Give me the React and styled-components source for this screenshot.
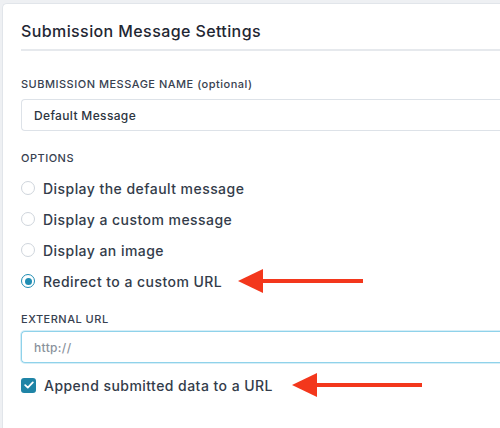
import React from 'react'
import styled, { createGlobalStyle } from 'styled-components'

const Global = createGlobalStyle`
  html, body {
    margin: 0;
    padding: 0;
    background: #eef0f3;
    font-family: "Inter", "Open Sans", sans-serif;
    overflow: hidden;
  }
`

const Page = styled.div`
  width: 500px;
  height: 428px;
  padding: 3px 0 0 2px;
  box-sizing: border-box;
  overflow: hidden;
`

const Card = styled.div`
  background: #fff;
  border: 1px solid #e1e5ea;
  border-right: none;
  border-bottom: none;
  border-radius: 5px 0 0 0;
  min-height: 440px;
  padding: 0 0 0 18px;
  box-sizing: border-box;
`

const Title = styled.h2`
  margin: 0;
  padding: 17px 0 8px;
  font-size: 16px;
  font-weight: 500;
  color: #1f2733;
  border-bottom: 2px solid #e6e9ed;
  letter-spacing: 0.4px;
`

const Field = styled.div`
  margin-top: ${p => p.$top}px;
`

const Label = styled.div`
  font-size: 11px;
  font-weight: 500;
  color: #384150;
  text-transform: ${p => (p.$upper ? 'uppercase' : 'none')};
  margin-bottom: ${p => p.$gap ?? 8}px;
  letter-spacing: 0.5px;
`

const Input = styled.div`
  height: 32px;
  box-sizing: border-box;
  border: ${p => (p.$focus ? '1.5px solid #8fd2ea' : '1px solid #dde2e8')};
  box-shadow: ${p => (p.$focus ? '0 0 0 1px #d6eef7' : 'none')};
  border-right: none;
  border-radius: 4px 0 0 4px;
  display: flex;
  align-items: center;
  padding-left: 12px;
  font-size: 12px;
  font-weight: 500;
  letter-spacing: 0.35px;
  color: ${p => (p.$placeholder ? '#8a929c' : '#2c3440')};
`

const Options = styled.div`
  display: flex;
  flex-direction: column;
  gap: 13px;
  margin-top: 14px;
`

const Option = styled.div`
  display: flex;
  align-items: center;
  gap: 8px;
  height: 18px;
  font-size: 14px;
  font-weight: 500;
  letter-spacing: 0.45px;
  color: #333c4a;
`

const Radio = styled.span`
  width: 14px;
  height: 14px;
  box-sizing: border-box;
  border-radius: 50%;
  border: ${p => (p.$on ? '1.5px solid #1f8db3' : '1px solid #cfd5dc')};
  display: flex;
  align-items: center;
  justify-content: center;
  flex-shrink: 0;
  &::after {
    content: '';
    display: ${p => (p.$on ? 'block' : 'none')};
    width: 7px;
    height: 7px;
    border-radius: 50%;
    background: #1f8db3;
  }
`

const Check = styled.span`
  width: 15px;
  height: 15px;
  border-radius: 3px;
  background: #1f84a6;
  display: flex;
  align-items: center;
  justify-content: center;
  flex-shrink: 0;
`

const Arrow = styled.svg`
  margin-left: ${p => p.$gap}px;
  flex-shrink: 0;
`

function RedArrow({ gap, length }) {
  return (
    <Arrow $gap={gap} width={length} height="28" viewBox={`0 0 ${length} 28`}>
      <polygon points="0,14 25,2 25,26" fill="#f3371c" />
      <rect x="22" y="12" width={length - 22} height="4" fill="#f3371c" />
    </Arrow>
  )
}

export default function App() {
  return (
    <Page>
      <Global />
      <Card>
        <Title>Submission Message Settings</Title>

        <Field $top={26}>
          <Label $upper={false}>SUBMISSION MESSAGE NAME (optional)</Label>
          <Input>Default Message</Input>
        </Field>

        <Field $top={20}>
          <Label $upper>Options</Label>
          <Options>
            <Option><Radio />Display the default message</Option>
            <Option><Radio />Display a custom message</Option>
            <Option><Radio />Display an image</Option>
            <Option>
              <Radio $on />Redirect to a custom URL
              <RedArrow gap={8} length={125} />
            </Option>
          </Options>
        </Field>

        <Field $top={22}>
          <Label $upper $gap={5}>External URL</Label>
          <Input $focus $placeholder>http://</Input>
        </Field>

        <Field $top={13}>
          <Option>
            <Check>
              <svg width="10" height="8" viewBox="0 0 10 8">
                <path d="M1.2 4.2 L3.8 6.6 L8.8 1.4" stroke="#fff" strokeWidth="1.8" fill="none" strokeLinecap="round" strokeLinejoin="round" />
              </svg>
            </Check>
            Append submitted data to a URL
            <RedArrow gap={11} length={130} />
          </Option>
        </Field>
      </Card>
    </Page>
  )
}
